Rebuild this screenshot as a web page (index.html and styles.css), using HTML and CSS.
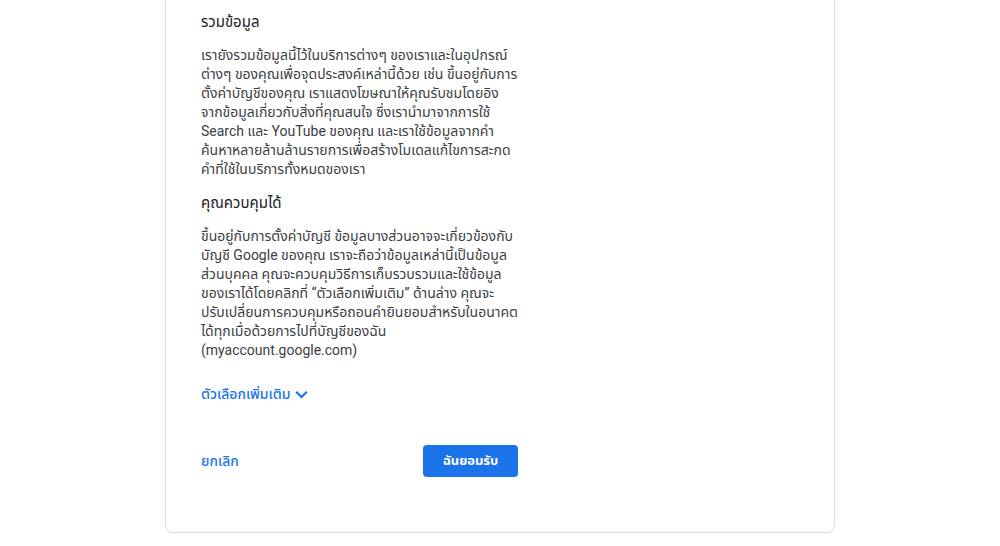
FILE: index.html
```html
<!DOCTYPE html>
<html lang="th">
<head>
<meta charset="utf-8">
<title>Google consent</title>
<link rel="stylesheet" href="styles.css">
</head>
<body>
	<div class="card">
		<div class="content">
			<h2 class="section__title">รวมข้อมูล</h2>
			<p class="section__text">เรายังรวมข้อมูลนี้ไว้ในบริการต่างๆ ของเราและในอุปกรณ์<br>
			ต่างๆ ของคุณเพื่อจุดประสงค์เหล่านี้ด้วย เช่น ขึ้นอยู่กับการ<br>
			ตั้งค่าบัญชีของคุณ เราแสดงโฆษณาให้คุณรับชมโดยอิง<br>
			จากข้อมูลเกี่ยวกับสิ่งที่คุณสนใจ ซึ่งเรานำมาจากการใช้<br>
			Search และ YouTube ของคุณ และเราใช้ข้อมูลจากคำ<br>
			ค้นหาหลายล้านล้านรายการเพื่อสร้างโมเดลแก้ไขการสะกด<br>
			คำที่ใช้ในบริการทั้งหมดของเรา</p>

			<h2 class="section__title">คุณควบคุมได้</h2>
			<p class="section__text">ขึ้นอยู่กับการตั้งค่าบัญชี ข้อมูลบางส่วนอาจจะเกี่ยวข้องกับ<br>
			บัญชี Google ของคุณ เราจะถือว่าข้อมูลเหล่านี้เป็นข้อมูล<br>
			ส่วนบุคคล คุณจะควบคุมวิธีการเก็บรวบรวมและใช้ข้อมูล<br>
			ของเราได้โดยคลิกที่ “ตัวเลือกเพิ่มเติม” ด้านล่าง คุณจะ<br>
			ปรับเปลี่ยนการควบคุมหรือถอนคำยินยอมสำหรับในอนาคต<br>
			ได้ทุกเมื่อด้วยการไปที่บัญชีของฉัน<br>
			(myaccount.google.com)</p>

			<a class="more" href="#">ตัวเลือกเพิ่มเติม
				<svg class="more__icon" width="15" height="15" viewBox="0 0 24 24"><path d="M3.5 7.5 12 16l8.5-8.5" fill="none" stroke="#1a73e8" stroke-width="3.5"/></svg>
			</a>

			<div class="actions">
				<a class="actions__cancel" href="#">ยกเลิก</a>
				<button class="actions__accept" type="button">ฉันยอมรับ</button>
			</div>
		</div>
	</div>
</body>
</html>
```
FILE: styles.css
```css
html, body {
	margin: 0;
	background: #fff;
}
body {
	font-family: Roboto, "Noto Sans Thai", "Noto Sans", Arial, sans-serif;
	color: #3c4043;
}
.card {
	box-sizing: border-box;
	width: 670px;
	margin: -40px auto 13px;
	padding: 51px 35px 55px;
	border: 1px solid #dadce0;
	border-radius: 8px;
}
.content {
	width: 317px;
}
.section__title {
	margin: 0 0 14px;
	font-size: 15px;
	font-weight: normal;
	line-height: 20px;
	color: #202124;
}
.section__text {
	margin: 0 0 14px;
	font-size: 14px;
	line-height: 19px;
	white-space: nowrap;
	color: #3c4043;
}
.more {
	display: inline-flex;
	align-items: center;
	gap: 4px;
	margin-top: 11px;
	font-size: 14px;
	line-height: 19px;
	font-weight: 500;
	color: #1a73e8;
	text-decoration: none;
}
.actions {
	display: flex;
	justify-content: space-between;
	align-items: center;
	margin-top: 41px;
}
.actions__cancel {
	font-size: 14px;
	font-weight: 500;
	color: #1a73e8;
	text-decoration: none;
}
.actions__accept {
	width: 95px;
	height: 32px;
	border: none;
	border-radius: 4px;
	background: #1a73e8;
	color: #fff;
	font-family: inherit;
	font-size: 13px;
	font-weight: bold;
}
```
